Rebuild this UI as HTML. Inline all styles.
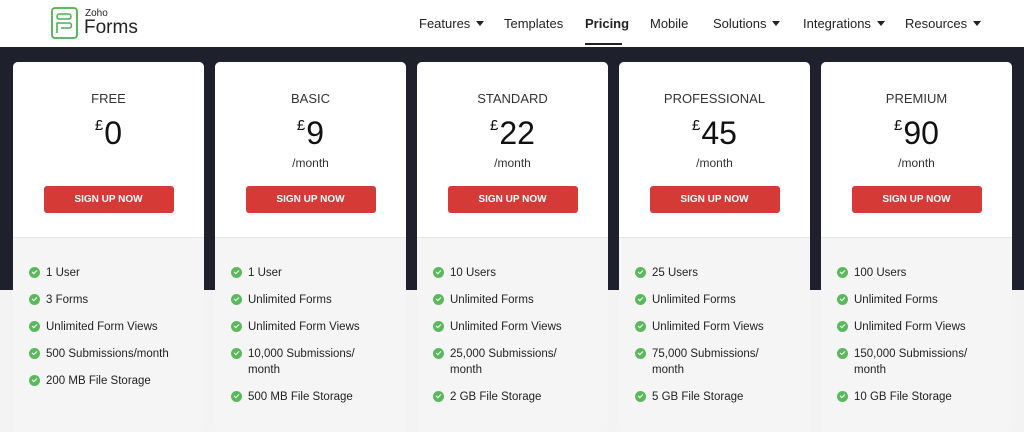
<!DOCTYPE html>
<html><head><style>
*{margin:0;padding:0;box-sizing:border-box}
body{width:1024px;height:424px;overflow:hidden;font-family:"Liberation Sans",sans-serif;background:#f3f3f3;position:relative}
.nav{height:47px;background:#fff;position:relative}
.nav a{position:absolute;top:16px;font-size:13px;color:#222;text-decoration:none}
.car{display:inline-block;width:0;height:0;border-left:4px solid transparent;border-right:4px solid transparent;border-top:5px solid #222;margin-left:6px;vertical-align:2px}
.dark{position:absolute;top:47px;left:0;width:1024px;height:243px;background:#1e212b}
.card{position:absolute;top:62px;width:191px;height:370px;background:#f5f5f5;border-radius:5px;overflow:hidden}
.head{height:176px;background:#fff;text-align:center;border-bottom:1px solid #e6e6e6}
.name{padding-top:29px;font-size:13px;color:#333;height:46px}
.price{font-size:32px;color:#111;line-height:36px;height:47px;padding-top:0}
.price sup{font-size:15px;vertical-align:14px;margin-right:1px}
.mo{font-size:12px;color:#333;height:31px;line-height:17px}
.btn{margin:0 auto;width:130px;height:27px;background:#d63a36;border-radius:3px;color:#fff;font-size:10px;font-weight:bold;line-height:27px}
ul{list-style:none;padding:27px 0 0 16px}
li{position:relative;padding-left:17px;font-size:11.5px;color:#222;line-height:16px;margin-bottom:11px}
li:before{content:"";position:absolute;left:0;top:2px;width:11px;height:11px;border-radius:50%;background:#5cb85c}
li:after{content:"";position:absolute;left:3px;top:4.5px;width:4px;height:2px;border-left:1.5px solid #fff;border-bottom:1.5px solid #fff;transform:rotate(-45deg)}
</style></head><body>
<div class="nav">
<svg style="position:absolute;left:51px;top:7px" width="27" height="32" viewBox="0 0 27 32"><rect x="1" y="1" width="25" height="30" rx="3" fill="none" stroke="#4caf50" stroke-width="1.8"/><rect x="6" y="7" width="14" height="5" rx="2.5" fill="none" stroke="#4caf50" stroke-width="1.6"/><path d="M6 26V16h12a2.5 2.5 0 0 1 0 5H10" fill="none" stroke="#4caf50" stroke-width="1.6"/></svg>
<div style="position:absolute;left:85px;top:8px;font-size:10px;color:#222">Zoho</div>
<div style="position:absolute;left:84px;top:17px;font-size:19px;color:#222">Forms</div>
<a style="left:419px">Features<span class="car"></span></a>
<a style="left:504px">Templates</a>
<a style="left:585px;font-weight:bold">Pricing</a>
<div style="position:absolute;left:585px;top:43px;width:37px;height:2px;background:#222"></div>
<a style="left:650px">Mobile</a>
<a style="left:713px">Solutions<span class="car"></span></a>
<a style="left:803px">Integrations<span class="car"></span></a>
<a style="left:905px">Resources<span class="car"></span></a>
</div>
<div class="dark"></div>
<div class="card" style="left:13px"><div class="head"><div class="name">FREE</div><div class="price"><sup>£</sup>0</div><div class="mo"></div><div class="btn">SIGN UP NOW</div></div>
<ul><li>1 User</li><li>3 Forms</li><li>Unlimited Form Views</li><li>500 Submissions/month</li><li>200 MB File Storage</li></ul></div>
<div class="card" style="left:215px"><div class="head"><div class="name">BASIC</div><div class="price"><sup>£</sup>9</div><div class="mo">/month</div><div class="btn">SIGN UP NOW</div></div>
<ul><li>1 User</li><li>Unlimited Forms</li><li>Unlimited Form Views</li><li>10,000 Submissions/<br>month</li><li>500 MB File Storage</li></ul></div>
<div class="card" style="left:417px"><div class="head"><div class="name">STANDARD</div><div class="price"><sup>£</sup>22</div><div class="mo">/month</div><div class="btn">SIGN UP NOW</div></div>
<ul><li>10 Users</li><li>Unlimited Forms</li><li>Unlimited Form Views</li><li>25,000 Submissions/<br>month</li><li>2 GB File Storage</li></ul></div>
<div class="card" style="left:619px"><div class="head"><div class="name">PROFESSIONAL</div><div class="price"><sup>£</sup>45</div><div class="mo">/month</div><div class="btn">SIGN UP NOW</div></div>
<ul><li>25 Users</li><li>Unlimited Forms</li><li>Unlimited Form Views</li><li>75,000 Submissions/<br>month</li><li>5 GB File Storage</li></ul></div>
<div class="card" style="left:821px"><div class="head"><div class="name">PREMIUM</div><div class="price"><sup>£</sup>90</div><div class="mo">/month</div><div class="btn">SIGN UP NOW</div></div>
<ul><li>100 Users</li><li>Unlimited Forms</li><li>Unlimited Form Views</li><li>150,000 Submissions/<br>month</li><li>10 GB File Storage</li></ul></div>
</body></html>
